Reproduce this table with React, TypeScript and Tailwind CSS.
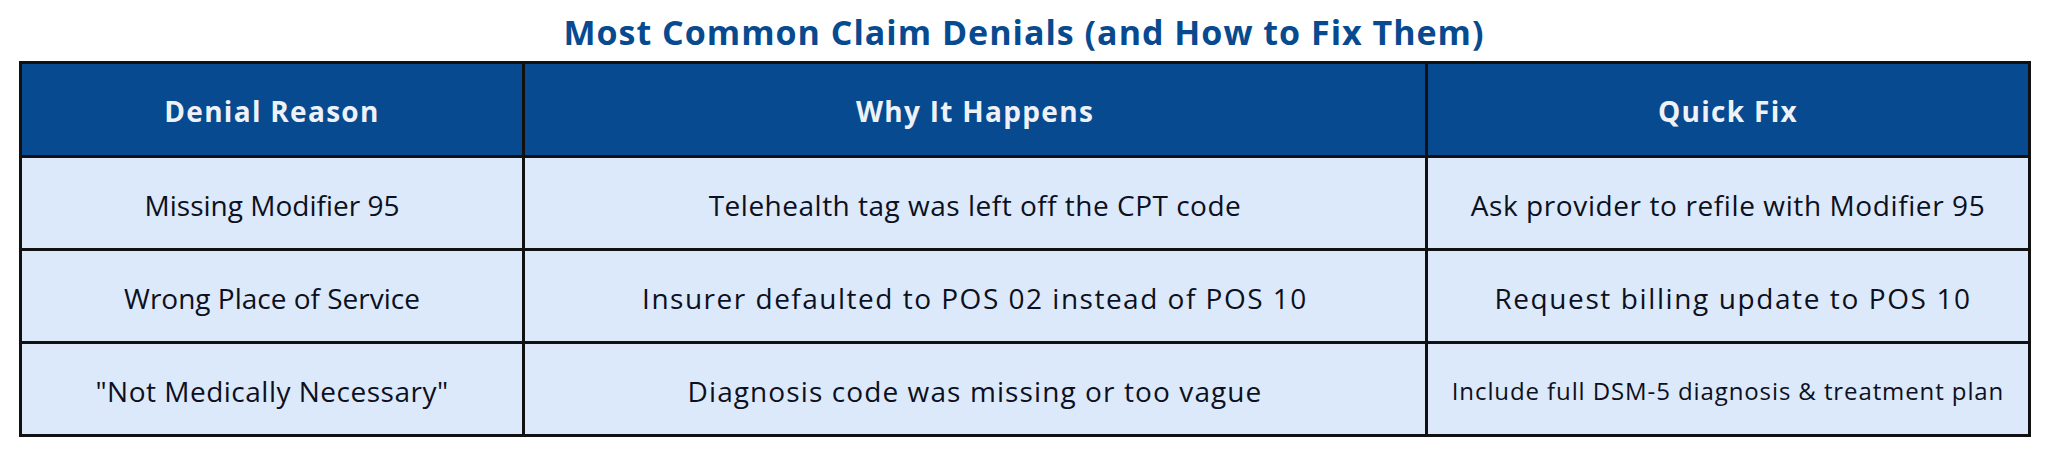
import React from 'react';

const rows = [
  {
    reason: 'Missing Modifier 95',
    reasonCls: 'tracking-[0px]',
    why: 'Telehealth tag was left off the CPT code',
    whyCls: 'tracking-[0.5px]',
    fix: 'Ask provider to refile with Modifier 95',
    fixCls: 'text-[28px] tracking-[0.6px]',
  },
  {
    reason: 'Wrong Place of Service',
    reasonCls: 'tracking-[0px]',
    why: 'Insurer defaulted to POS 02 instead of POS 10',
    whyCls: 'tracking-[1.5px]',
    fix: 'Request billing update to POS 10',
    fixCls: 'text-[28px] tracking-[1.6px] pl-[10px]',
  },
  {
    reason: '"Not Medically Necessary"',
    reasonCls: 'tracking-[0.5px]',
    why: 'Diagnosis code was missing or too vague',
    whyCls: 'tracking-[1.1px]',
    fix: 'Include full DSM-5 diagnosis & treatment plan',
    fixCls: 'text-[24px] tracking-[0.9px]',
  },
];

const cell = 'border-[3px] border-[#111] text-center pt-[4px]';

export default function App() {
  return (
    <div className="w-[2048px] h-[453px] bg-white px-[19px] pt-[9px] font-['Open_Sans',sans-serif]">
      <h1 className="text-center text-[34px] font-bold leading-[46px] tracking-[1px] text-[#074a90] mb-[6px]">
        Most Common Claim Denials (and How to Fix Them)
      </h1>
      <table className="w-[2009px] table-fixed border-collapse border-[3px] border-[#111]">
        <colgroup>
          <col className="w-[503px]" />
          <col className="w-[903px]" />
          <col className="w-[603px]" />
        </colgroup>
        <thead>
          <tr className="h-[94px] bg-[#074a90] text-[#eef2f8] text-[28px] font-bold tracking-[1.3px]">
            <th className="border-[3px] border-[#111] pt-[2px]">Denial Reason</th>
            <th className="border-[3px] border-[#111] pt-[2px]">Why It Happens</th>
            <th className="border-[3px] border-[#111] pt-[2px]">Quick Fix</th>
          </tr>
        </thead>
        <tbody>
          {rows.map((r) => (
            <tr key={r.reason} className="h-[93px] bg-[#dce9fa] text-[#0c1020] text-[28px]">
              <td className={`${cell} ${r.reasonCls}`}>{r.reason}</td>
              <td className={`${cell} ${r.whyCls}`}>{r.why}</td>
              <td className={`${cell} ${r.fixCls}`}>{r.fix}</td>
            </tr>
          ))}
        </tbody>
      </table>
    </div>
  );
}
